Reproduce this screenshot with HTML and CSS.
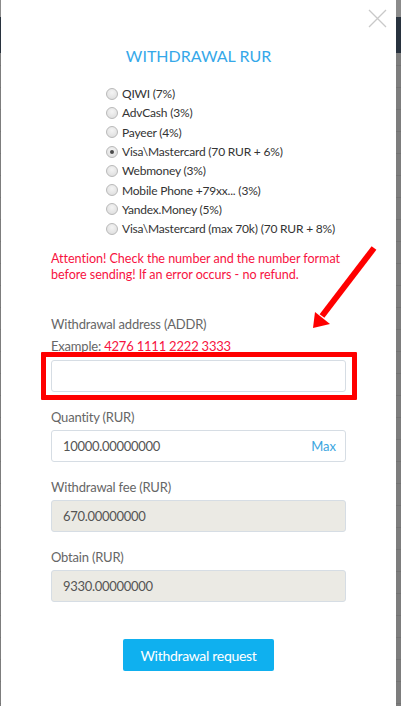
FILE: index.html
```html
<!DOCTYPE html>
<html lang="en">
<head>
<meta charset="utf-8">
<title>Withdrawal RUR</title>
<link rel="stylesheet" href="styles.css">
</head>
<body>
<div class="backdrop">
  <div class="modal">
    <button class="close" aria-label="Close">
      <svg width="19" height="19" viewBox="0 0 19 19"><path d="M1 1L18 18M18 1L1 18" stroke="#c9c9c9" stroke-width="1.3" fill="none"/></svg>
    </button>
    <h2 class="title">WITHDRAWAL RUR</h2>
    <ul class="methods">
      <li><span class="radio"></span>QIWI (7%)</li>
      <li><span class="radio"></span>AdvCash (3%)</li>
      <li><span class="radio"></span>Payeer (4%)</li>
      <li><span class="radio checked"></span>Visa\Mastercard (70 RUR + 6%)</li>
      <li><span class="radio"></span>Webmoney (3%)</li>
      <li><span class="radio"></span>Mobile Phone +79xx... (3%)</li>
      <li><span class="radio"></span>Yandex.Money (5%)</li>
      <li><span class="radio"></span>Visa\Mastercard (max 70k) (70 RUR + 8%)</li>
    </ul>
    <p class="warning">Attention! Check the number and the number format before sending! If an error occurs - no refund.</p>
    <div class="field field-addr">
      <label class="label">Withdrawal address (ADDR)</label>
      <div class="example">Example: <span class="red">4276 1111 2222 3333</span></div>
      <div class="highlight">
        <div class="input"></div>
      </div>
    </div>
    <div class="field">
      <label class="label">Quantity (RUR)</label>
      <div class="input"><span>10000.00000000</span><span class="max">Max</span></div>
    </div>
    <div class="field">
      <label class="label">Withdrawal fee (RUR)</label>
      <div class="input disabled"><span>670.00000000</span></div>
    </div>
    <div class="field">
      <label class="label">Obtain (RUR)</label>
      <div class="input disabled"><span>9330.00000000</span></div>
    </div>
    <div class="actions">
      <button class="submit">Withdrawal request</button>
    </div>
    <svg class="arrow" width="80" height="100" viewBox="0 0 80 100">
      <line x1="71" y1="9" x2="19" y2="77" stroke="#ff0000" stroke-width="6"/>
      <polygon points="10,89 12,73 27,85" fill="#ff0000"/>
    </svg>
  </div>
</div>
</body>
</html>
```
FILE: styles.css
```css
html, body {
  margin: 0;
  padding: 0;
}
body {
  width: 401px;
  height: 706px;
  overflow: hidden;
  font-family: Lato, "Open Sans", sans-serif;
  background:
    linear-gradient(#8b8b8b, #8b8b8b) 0 0 / 100% 17px no-repeat,
    linear-gradient(#28323e, #28323e) 0 17px / 100% 36px no-repeat,
    repeating-linear-gradient(#7d7d7d 0, #7d7d7d 21px, #737373 21px, #737373 22px);
}
.backdrop {
  display: flex;
  padding-left: 1px;
}
.modal {
  position: relative;
  width: 395px;
  height: 706px;
  background: #ffffff;
  box-sizing: border-box;
  padding: 0 50px 0 50px;
}
.close {
  position: absolute;
  top: 9px;
  right: 9px;
  padding: 0;
  border: 0;
  background: none;
  width: 19px;
  height: 19px;
}
.title {
  margin: 0;
  padding-top: 44px;
  font-size: 16px;
  line-height: 24px;
  font-weight: 400;
  color: #35a8e9;
  text-align: center;
}
.methods {
  list-style: none;
  margin: 16px 0 0 0;
  padding: 0 0 0 55px;
  font-size: 12px;
  letter-spacing: -0.2px;
  color: #333;
}
.methods li {
  display: flex;
  align-items: center;
  height: 19.3px;
}
.radio {
  width: 12px;
  height: 12px;
  border-radius: 50%;
  border: 1px solid #b9b9b9;
  background: radial-gradient(circle at 50% 35%, #f4f4f4 0, #e2e2e2 70%, #d6d6d6 100%);
  box-sizing: border-box;
  margin-right: 4px;
  display: flex;
  align-items: center;
  justify-content: center;
  flex: none;
}
.radio.checked::after {
  content: "";
  width: 4px;
  height: 4px;
  border-radius: 50%;
  background: #4a4a4a;
}
.warning {
  margin: 13px 0 0 0;
  font-size: 12.6px;
  letter-spacing: -0.05px;
  line-height: 16px;
  color: #f7133f;
}
.field {
  margin-top: 15px;
}
.field-addr {
  margin-top: 31px;
}
.label {
  display: block;
  font-size: 13px;
  letter-spacing: -0.2px;
  line-height: 20px;
  color: #666;
  margin-bottom: 3px;
}
.field-addr .label {
  margin-bottom: 2px;
}
.example {
  font-size: 13px;
  letter-spacing: -0.2px;
  line-height: 20px;
  color: #666;
  margin-bottom: 4px;
}
.red {
  color: #f7133f;
}
.highlight {
  position: relative;
}
.highlight::after {
  content: "";
  position: absolute;
  left: -10px;
  right: -11px;
  top: -8px;
  bottom: -8px;
  border: 5px solid #ff0000;
  border-radius: 1px;
}
.input {
  height: 32px;
  box-sizing: border-box;
  border: 1px solid #d6dde4;
  border-radius: 3px;
  display: flex;
  align-items: center;
  justify-content: space-between;
  padding: 0 9px 0 11px;
  font-size: 13px;
  letter-spacing: -0.3px;
  color: #555;
  background: #fff;
}
.input.disabled {
  background: #ebeae4;
}
.max {
  color: #3aa5e0;
  letter-spacing: 0;
}
.actions {
  display: flex;
  justify-content: center;
  margin-top: 37px;
}
.submit {
  width: 151px;
  height: 32px;
  border: 0;
  border-radius: 2px;
  background: #0fb0ef;
  color: #fff;
  font-family: Lato, "Open Sans", sans-serif;
  font-size: 14px;
  letter-spacing: -0.3px;
  padding: 0;
}
.arrow {
  position: absolute;
  left: 302px;
  top: 239px;
  pointer-events: none;
}
```
